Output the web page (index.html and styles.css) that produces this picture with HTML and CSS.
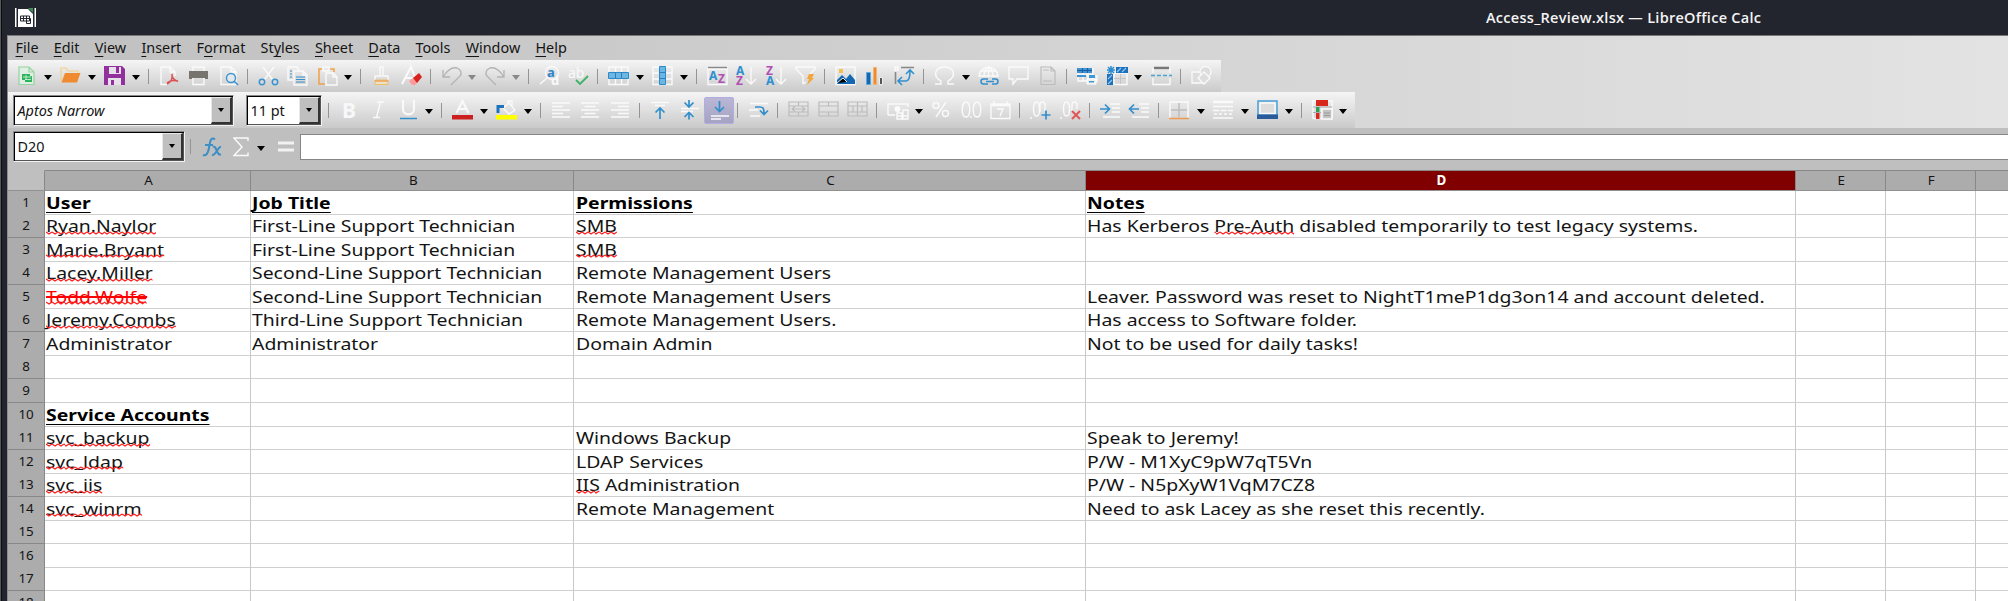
FILE: index.html
```html
<!DOCTYPE html>
<html lang="en">
<head>
<meta charset="utf-8">
<title>Access_Review.xlsx — LibreOffice Calc</title>
<link rel="stylesheet" href="styles.css">
</head>
<body>
<div class="window">
<header class="titlebar">
  <svg class="app" viewBox="0 0 21 19"><path fill="#fff" d="M0 0h1.500v19H0zM19.500 0H21v19h-1.500zM3 1h10l5 5v13H3z"/><path fill="#3f8a55" d="M13 0h5v5z"/><path fill="none" stroke="#22242d" d="M5.500 8h9v5h-9zM5.500 10.500h9M8.500 8v5M11.500 8v7.500h4v-5h-4"/></svg>
  <span class="title">Access_Review.xlsx — LibreOffice Calc</span>
</header>
<div class="app-body">
<div class="bars">
<nav class="menu"><span><u>F</u>ile</span><span><u>E</u>dit</span><span><u>V</u>iew</span><span><u>I</u>nsert</span><span>F<u>o</u>rmat</span><span>St<u>y</u>les</span><span><u>S</u>heet</span><span><u>D</u>ata</span><span><u>T</u>ools</span><span><u>W</u>indow</span><span><u>H</u>elp</span></nav>

<div class="toolbar standard">
<svg class="ic" viewBox="0 0 21 20"><path fill="#e0eee3" stroke="#93d5a0" stroke-width="1.200" d="M3 1h10l5 5v12.500H3zM13 1v5h5"/><path fill="#2ab45c" d="M6 8h8v2h2v6H9v-2H6z"/><path stroke="#dff3e4" stroke-width=".8" d="M7 11h8M10 9v5M9 13.500h6"/></svg><b class="dd"></b>
<svg class="ic" viewBox="0 0 21 20"><path fill="none" stroke="#f5cf86" stroke-width="1.200" d="M1 15V2h5l2 3h10v3"/><path fill="#ef8a31" d="M5 7h15.500l-3.500 9.500H1.500z"/></svg><b class="dd"></b>
<svg class="ic" viewBox="0 0 21 20"><path fill="#92309e" d="M0 0h18l3 3v16H0z"/><path fill="#e6e0e8" d="M5 1h12v7H5zM4 12h13v7H4z"/><path fill="#92309e" d="M12 1h3v6h-3zM7 14h3v5H7z"/></svg><b class="dd"></b><b class="sep"></b>
<svg class="ic" viewBox="0 0 21 20"><path class="w" d="M2 1h9l5 5M2 1v17.500h6M11 1v5h5v4"/><path fill="none" stroke="#dc5050" stroke-width="1.500" d="M13 8c1 5-1 8-5 10M13 8c-.5 4 2 6 6 7.500M8 17c3-3 6-3 11-2"/></svg>
<svg class="ic" viewBox="0 0 21 20"><path class="w" d="M5 5V1h11v4M5 12v6.500h11V12"/><path fill="#77736f" d="M1 5h19v8h-3v-1H4v1H1z"/></svg>
<svg class="ic" viewBox="0 0 21 20"><path class="w" d="M3 1h10l5 5v12.500H3zM13 1v5h5"/><circle cx="13" cy="12" r="4.500" fill="#e4e8ec" stroke="#3b93cf" stroke-width="1.400"/><path stroke="#3b93cf" stroke-width="1.600" d="M16 15l4 4"/></svg><b class="sep"></b>
<svg class="ic" viewBox="0 0 21 20"><path class="w" d="M5 1l10 13M16 1L6 14"/><g fill="none" stroke="#3b93cf" stroke-width="1.500"><circle cx="4" cy="16" r="2.700"/><circle cx="17" cy="16" r="2.700"/></g></svg>
<svg class="ic" viewBox="0 0 21 20"><path class="w" d="M1 1h9l2 3M1 1v13h5M7 5h9l4 4v10H7zM16 5v4h4"/><path class="bl" d="M3 5h2M3 8h2M3 11h2M9 11h9M9 13.500h9M9 16h9"/></svg>
<svg class="ic" viewBox="0 0 21 20"><path fill="none" stroke="#f0a34b" stroke-width="1.600" d="M5 3H2v15h6M13 3h4v3"/><path class="w" d="M6 1h6v4H6zM9 7h7l4 4v8H9zM16 7v4h4"/></svg><b class="dd"></b><b class="sep"></b>
<svg class="ic" viewBox="0 0 21 20"><path class="w" d="M9 9V1h3v8M4 14V10h13v4"/><path fill="#ece1c6" stroke="#edbf68" d="M4 14h13v4.500H4z"/><path stroke="#ef8a31" d="M4 15h13"/></svg>
<svg class="ic" viewBox="0 0 21 20"><path class="w k" d="M1 18L10 1l4 10M5 12h7"/><path fill="#ff9a9a" d="M8 15l4-3 4 5-2 2h-3z"/><path fill="#d8221f" d="M12 12l6-5 3 4-5 6z"/></svg><b class="sep"></b>
<svg class="ic" viewBox="0 0 21 20"><path class="g" d="M2 4v7h7M2 11C7 3 12 1 16 2c5 2 5 7 2 9l-8 8"/></svg><b class="dd off"></b>
<svg class="ic" viewBox="0 0 21 20"><path class="g" d="M19 4v7h-7M19 11C14 3 9 1 5 2 0 4 0 9 3 11l8 8"/></svg><b class="dd off"></b><b class="sep"></b>
<svg class="ic" viewBox="0 0 21 20"><circle cx="13" cy="7" r="6.500" class="w"/><path class="w" d="M8 12l-7 6"/><text x="8" y="11" class="t" fill="#2f86c8" font-size="13">a</text><text x="12" y="19" class="t" fill="#fafafa" font-size="13">d</text></svg>
<svg class="ic" viewBox="0 0 21 20"><text x="0" y="12" class="t n" fill="#fafafa" font-size="14">ab</text><path fill="none" stroke="#3fb268" stroke-width="1.800" d="M8 14l4 4 8-8"/></svg><b class="sep"></b>
<svg class="ic" viewBox="0 0 21 20"><path class="w" d="M1 1h19v17.500H1zM7.500 1v17M13.500 1v17"/><path fill="#6db5e2" stroke="#2b8bc9" d="M.5 6.500h20v6H.5z"/><path stroke="#2b7fc0" d="M7.500 6v7M13.500 6v7"/></svg><b class="dd"></b>
<svg class="ic" viewBox="0 0 21 20"><path class="w" d="M1 1h19v17.500H1zM1 7h19M1 13h19"/><path fill="#6db5e2" stroke="#2b8bc9" d="M7.500.5h6v18h-6z"/><path stroke="#2b7fc0" d="M7 6.500h7M7 12.500h7"/></svg><b class="dd"></b><b class="sep"></b>
<svg class="ic" viewBox="0 0 21 20"><path class="w" d="M1 3h19v15.500H1z"/><path stroke="#888" stroke-width="1.400" d="M1 1.500h19"/><text x="2" y="14" class="t" fill="#2f8fd0" font-size="12">A</text><text x="11" y="17" class="t" fill="#b14fb5" font-size="12">Z</text></svg>
<svg class="ic" viewBox="0 0 21 20"><text x="0" y="9" class="t" fill="#2f8fd0" font-size="12">A</text><text x="0" y="19" class="t" fill="#b14fb5" font-size="12">Z</text><path class="w" d="M15 1v17M10 13l5 5 5-5"/></svg>
<svg class="ic" viewBox="0 0 21 20"><text x="0" y="9" class="t" fill="#b14fb5" font-size="12">Z</text><text x="0" y="19" class="t" fill="#2f8fd0" font-size="12">A</text><path class="w" d="M15 1v17M10 13l5 5 5-5"/></svg>
<svg class="ic" viewBox="0 0 21 20"><path class="w" d="M8 18V10L1 3V1h19v2l-5 5M8 18l3-2"/><path fill="#f4a63b" d="M14 8h5l-2 4h2l-7 7 2-6h-2z"/></svg><b class="sep"></b>
<svg class="ic" viewBox="0 0 21 20"><path class="w" d="M1 1h19v17.500H1z"/><path fill="#1268b3" d="M2 18v-4l5-5 4 4 4-5 5 6v4z"/><path fill="#f6c04f" d="M4 3h4v4H4z"/><path stroke="#e6edf4" d="M2 17l6-5 4 4"/></svg>
<svg class="ic" viewBox="0 0 21 20"><path fill="#1268b3" stroke="#60a8dc" d="M1.500 6.500h4v12h-4z"/><path fill="#ef8a31" stroke="#f3b56d" d="M8.500 1.500h3v17h-3z"/><path fill="#555" stroke="#eee" d="M14.500 11.500h3v7h-3z"/></svg>
<svg class="ic" viewBox="0 0 21 20"><path stroke="#888" stroke-width="1.600" fill="none" d="M7 1.500h13M1.500 6v12" /><path class="w" d="M1 1h3v3H1z"/><path fill="none" stroke="#3190ce" stroke-width="1.600" d="M5 15h7c3 0 4-3 4-10M8 11l-4 4 4 4M12 8l4-4 4 4"/></svg><b class="sep"></b>
<svg class="ic" viewBox="0 0 21 20"><path class="w" d="M1 18h6v-3C-2 10 1 1 10.500 1S23 10 14 15v3h6"/></svg><b class="dd"></b>
<svg class="ic" viewBox="0 0 21 20"><path class="w" d="M1 11C1-2 20-2 20 11M1 10h19M3 5h15M10.500 1v10M6 11C6 5 8 2 10.500 1 13 2 15 5 15 11"/><path fill="none" stroke="#338fcb" stroke-width="1.500" d="M10 13H5.500a2.500 2.500 0 000 5H10M14 13h3.500a2.500 2.500 0 010 5H14M8 15.500h8"/></svg>
<svg class="ic" viewBox="0 0 21 20"><path class="w" d="M1 1h19v12H9l-4 5v-5H1z"/></svg>
<svg class="ic" viewBox="0 0 21 20"><path class="f" d="M4 1h10l4 4v13.500H4zM14 1v4h4M6 4h6M6 15h9"/></svg><b class="sep"></b>
<svg class="ic" viewBox="0 0 21 20"><path class="w" d="M1 3h15v12H1zM6 3v12M11 3v12M1 9h15M16 10h4v6"/><path fill="#3f93d2" d="M0 2h15v5H0zM0 9h9v2H0z"/><path stroke="#1c5f9f" d="M0 4.500h15M5.500 2v5M10.500 2v5"/><path fill="#eee" stroke="#fff" d="M10 13h9v5h-9z"/><path fill="#3d9ad6" d="M12 9h6v3h-6zM12 15h5v1.500h-5z"/></svg>
<svg class="ic" viewBox="0 0 21 20"><path class="w" d="M7 7h13v11.500H7z"/><path stroke="#c4c4c4" d="M7 12.500h12M13.500 8v10"/><path fill="#1d70bd" d="M9 1h12v6H9zM0 8h6v11H0z"/><path stroke="#8cc8ef" stroke-width="1.200" d="M10 6l4-4M15 6l4-4M1 13l4-4M1 18l4-4"/><path stroke="#2d8fd0" stroke-width="1.500" d="M4 0v8M0 4h8M1 1l6 6M7 1L1 7"/></svg><b class="dd"></b>
<svg class="ic" viewBox="0 0 21 20"><path class="w" d="M2 7V3h17v4M2 12v6.500h17V12"/><path stroke="#777" stroke-width="2.500" d="M3 2h15"/><path stroke="#4ba3d3" stroke-width="1.500" stroke-dasharray="4 2" d="M0 9.500h21"/></svg><b class="sep"></b>
<svg class="ic" viewBox="0 0 21 20"><g fill="#ddd" class="s"><path d="M1 6h11v11H1z"/><circle cx="14.500" cy="6" r="5.500"/><path d="M13 6l6 6-6 6-6-6z"/></g></svg>
</div>

<div class="toolbar format">
<div class="combo font"><em>Aptos Narrow</em><i></i></div><div class="combo size"><span>11 pt</span><i></i></div><b class="sep"></b>
<svg class="ic" viewBox="0 0 21 20"><text x="3" y="17.500" class="t" fill="#f8f8f8" font-size="21">B</text></svg>
<svg class="ic" viewBox="0 0 21 20"><path class="w" d="M9 2h7M5 17.500h7M12.500 2l-4 15.500"/></svg>
<svg class="ic" viewBox="0 0 21 20"><path class="w k" d="M5 0v9c0 7 11 7 11 0V0"/><path stroke="#338fcb" stroke-width="1.500" d="M2 18.500h17"/></svg><b class="dd"></b><b class="sep"></b>
<svg class="ic" viewBox="0 0 21 20"><path class="w k" d="M4.500 13L10.500 1l6 12M6.500 9h8"/><path fill="#cc2020" d="M0 15h21v4.500H0z"/></svg><b class="dd"></b>
<svg class="ic" viewBox="0 0 21 20"><path class="w" d="M7 8l6-5 6 7-6 4zM12 5V1h4v6"/><path fill="none" stroke="#1d74bd" stroke-width="3" d="M2 13V6.500h6"/><path fill="#ff0" d="M0 15h21v4.500H0z"/></svg><b class="dd"></b><b class="sep"></b>
<svg class="ic" viewBox="0 0 21 20"><path class="w" d="M1 3h18M1 6.500h11M1 10h18M1 13.500h11M1 17h18"/></svg>
<svg class="ic" viewBox="0 0 21 20"><path class="w" d="M1 3h18M4.500 6.500h11M1 10h18M4.500 13.500h11M1 17h18"/></svg>
<svg class="ic" viewBox="0 0 21 20"><path class="w" d="M1 3h18M8 6.500h11M1 10h18M8 13.500h11M1 17h18"/></svg><b class="sep"></b>
<svg class="ic" viewBox="0 0 21 20"><path class="w" d="M1 2.500h18M5 5.500h10"/><path class="bl a" d="M10 19V8M5.500 12.500L10 8l4.500 4.500"/></svg>
<svg class="ic" viewBox="0 0 21 20"><path class="w" d="M2 8.500h18M2 11.500h12"/><path class="bl a" d="M10 0v6M5.500 2.500L10 7l4.500-4.500M10 19.500v-6M5.500 17L10 12.500l4.500 4.500"/></svg>
<span class="on"><svg class="ic" viewBox="0 0 21 20"><path class="w" d="M2 15h18M2 18h10"/><path class="bl a" d="M10.500 0v10M6 6l4.500 4.500L15 6"/></svg></span><b class="sep"></b>
<svg class="ic" viewBox="0 0 21 20"><path class="w" d="M2 3.500h18M1 10h9M2 16h10"/><path class="bl a" d="M7 7h5c4 0 4 3 4 7M12 10.500l4 4 4-4"/></svg><b class="sep"></b>
<svg class="ic" viewBox="0 0 21 20"><path class="f" d="M1 2h19v14H1zM1 6h19M1 12h19M10.500 2v4M10.500 12v4M4 9h13M7 6.500L4 9l3 2.500M14 6.500L17 9l-3 2.500"/></svg>
<svg class="ic" viewBox="0 0 21 20"><path class="f" d="M1 2h19v14H1zM1 6h19M1 12h19M10.500 2v4M10.500 12v4"/></svg>
<svg class="ic" viewBox="0 0 21 20"><path class="f" d="M1 2h19v14H1zM1 6h19M1 12h19M10.500 2v14M6 6v6M15 6v6"/></svg><b class="sep"></b>
<svg class="ic" viewBox="0 0 21 20"><path class="w" d="M1 15V4h20v3M1 15h7"/><circle cx="10.500" cy="9" r="3" fill="#fafafa"/><path class="w" d="M10 13h5v6h-5zM16 10h5v9h-5zM10 16h11"/></svg><b class="dd"></b>
<svg class="ic" viewBox="0 0 21 20"><g class="w"><circle cx="5" cy="5.500" r="3"/><circle cx="14.500" cy="13.500" r="3"/><path d="M15 2L5 17"/></g></svg>
<svg class="ic" viewBox="0 0 21 20"><path class="w" d="M5 2c5 0 5 15 0 15S0 2 5 2zM16 2c5 0 5 15 0 15S11 2 16 2zM10 16v2"/></svg>
<svg class="ic" viewBox="0 0 21 20"><path class="w" d="M1 4h19v14.500H1zM1 5.500h19M4 1v4M17 1v4M7 9h6l-3 7"/></svg><b class="sep"></b>
<svg class="ic" viewBox="0 0 21 20"><path class="w" d="M6.500 2c4 0 4 14 0 14s-4-14 0-14zM15 11V5c0-4-5-4-5 0v7M1 17v2"/><path class="bl a" d="M11.500 15h9M16 10.500v9"/></svg>
<svg class="ic" viewBox="0 0 21 20"><path class="w" d="M6.500 2c4 0 4 14 0 14s-4-14 0-14zM17 9V5c0-4-5-4-5 0v6M1 17v2"/><path stroke="#e05555" stroke-width="2" d="M12 11l8 8M20 11l-8 8"/></svg><b class="sep"></b>
<svg class="ic" viewBox="0 0 21 20"><path class="w" d="M10 4h10M12 8h8M12 12h8M3 17h17"/><path class="bl a" d="M0 9h9M5 4.500L9.500 9 5 13.500"/></svg>
<svg class="ic" viewBox="0 0 21 20"><path class="w" d="M10 4h10M12 8h8M12 12h8M3 17h17"/><path class="bl a" d="M1 9h9M5 4.500L.5 9 5 13.500"/></svg><b class="sep"></b>
<svg class="ic" viewBox="0 0 21 20"><path class="w" d="M1 18V2h18v16"/><path stroke="#bdbdbd" stroke-width="1.500" d="M10 3v14M2 10h16"/><path stroke="#ee9a52" stroke-width="1.500" d="M0 18.500h20"/></svg><b class="dd"></b>
<svg class="ic" viewBox="0 0 21 20"><path stroke="#fafafa" stroke-width="2.500" d="M0 2h20"/><path class="w" d="M0 6.500h20M0 18h20"/><path class="w" stroke-dasharray="6 1.500" d="M0 10.500h20"/><path class="w" stroke-dasharray="3 2" d="M1 14h20"/></svg><b class="dd"></b>
<svg class="ic" viewBox="0 0 21 20"><path fill="#ddd" stroke="#49a0d8" stroke-width="1.500" d="M1 1h19v14H1z"/><path class="w" d="M3 3h15v10.500H3z"/><path fill="#2a5c9c" d="M0 14.500h21V19H0z"/></svg><b class="dd"></b><b class="sep"></b>
<svg class="ic" viewBox="0 0 21 20"><path class="w" d="M1 1h19v17.500H1z"/><path stroke="#aaa" d="M1 7h19M1 12.500h8"/><path fill="#d8281c" d="M4 0h12v6H4zM4 13h3.500v6H4z"/><path fill="#2f9e50" d="M4 7h3.500v5H4z"/><path fill="#c4c4c4" stroke="#fafafa" stroke-width="1.500" d="M10 9h10v10H10z"/><path stroke="#999" d="M12 13h6M12 15.500h6"/></svg><b class="dd"></b>
</div>
</div>

<div class="formula">
<div class="combo name"><span>D20</span><i></i></div><b class="sep"></b>
<svg class="fx" viewBox="0 0 20 20"><path fill="none" stroke="#3a8fc6" stroke-width="2" d="M13 2.500C9-1 8 5 7.500 8S6 20 1 18M3 8h8M11 10c4-2 3 9 8 7.500M19 10c-3-1-5 9-9 8"/></svg>
<svg class="sum" viewBox="0 0 16 20"><path class="w" d="M15 4V1H1l8 9-8 8.500h14v-3"/></svg><b class="dd"></b>
<svg class="eq" viewBox="0 0 16 20"><path stroke="#f2f2f2" stroke-width="3" d="M0 6h16M0 13h16"/></svg>
<div class="input"></div>
</div>

<main class="sheet">
<div class="row head"><div></div><div>A</div><div>B</div><div>C</div><div class="sel">D</div><div>E</div><div>F</div><div></div></div>
<div class="row"><div>1</div><div><span class="hd">User</span></div><div><span class="hd">Job Title</span></div><div><span class="hd">Permissions</span></div><div><span class="hd">Notes</span></div><div></div><div></div><div></div></div>
<div class="row"><div>2</div><div><span><q>Ryan.Naylor</q></span></div><div><span>First-Line Support Technician</span></div><div><span><q>SMB</q></span></div><div><span>Has Kerberos <q>Pre-Auth</q> disabled temporarily to test legacy systems.</span></div><div></div><div></div><div></div></div>
<div class="row"><div>3</div><div><span><q>Marie.Bryant</q></span></div><div><span>First-Line Support Technician</span></div><div><span><q>SMB</q></span></div><div></div><div></div><div></div><div></div></div>
<div class="row"><div>4</div><div><span><q>Lacey.Miller</q></span></div><div><span>Second-Line Support Technician</span></div><div><span>Remote Management Users</span></div><div></div><div></div><div></div><div></div></div>
<div class="row"><div>5</div><div><span class="gone"><q>Todd.Wolfe</q></span></div><div><span>Second-Line Support Technician</span></div><div><span>Remote Management Users</span></div><div><span>Leaver. Password was reset to NightT1meP1dg3on14 and account deleted.</span></div><div></div><div></div><div></div></div>
<div class="row"><div>6</div><div><span><q>Jeremy.Combs</q></span></div><div><span>Third-Line Support Technician</span></div><div><span>Remote Management Users.</span></div><div><span>Has access to Software folder.</span></div><div></div><div></div><div></div></div>
<div class="row"><div>7</div><div><span>Administrator</span></div><div><span>Administrator</span></div><div><span>Domain Admin</span></div><div><span>Not to be used for daily tasks!</span></div><div></div><div></div><div></div></div>
<div class="row"><div>8</div><div></div><div></div><div></div><div></div><div></div><div></div><div></div></div>
<div class="row"><div>9</div><div></div><div></div><div></div><div></div><div></div><div></div><div></div></div>
<div class="row"><div>10</div><div><span class="hd">Service Accounts</span></div><div></div><div></div><div></div><div></div><div></div><div></div></div>
<div class="row"><div>11</div><div><span><q>svc_backup</q></span></div><div></div><div><span>Windows Backup</span></div><div><span>Speak to Jeremy!</span></div><div></div><div></div><div></div></div>
<div class="row"><div>12</div><div><span><q>svc_ldap</q></span></div><div></div><div><span>LDAP Services</span></div><div><span>P/W - M1XyC9pW7qT5Vn</span></div><div></div><div></div><div></div></div>
<div class="row"><div>13</div><div><span><q>svc_iis</q></span></div><div></div><div><span><q>IIS</q> Administration</span></div><div><span>P/W - N5pXyW1VqM7CZ8</span></div><div></div><div></div><div></div></div>
<div class="row"><div>14</div><div><span><q>svc_winrm</q></span></div><div></div><div><span>Remote Management</span></div><div><span>Need to ask Lacey as she reset this recently.</span></div><div></div><div></div><div></div></div>
<div class="row"><div>15</div><div></div><div></div><div></div><div></div><div></div><div></div><div></div></div>
<div class="row"><div>16</div><div></div><div></div><div></div><div></div><div></div><div></div><div></div></div>
<div class="row"><div>17</div><div></div><div></div><div></div><div></div><div></div><div></div><div></div></div>
<div class="row"><div>18</div><div></div><div></div><div></div><div></div><div></div><div></div><div></div></div>
</main>
</div>
</div>
</body>
</html>
```

FILE: styles.css
```css
* { box-sizing: border-box; }
body { margin: 0; font-family: "Noto Sans", sans-serif; color: #141414; }
.window { width: 2008px; height: 601px; overflow: hidden; background: #23252e; border-left: 1px solid #55575c; box-shadow: inset 1px 0 #0c0d11; padding-left: 6px; }
.titlebar { height: 35px; display: flex; align-items: center; padding-left: 8px; border-radius: 8px 0 0 0; }
.app { width: 21px; height: 19px; }
.title { margin-left: 1450px; font: 600 14.500px "Open Sans", sans-serif; letter-spacing: .28px; color: #f4f4f4; white-space: nowrap; }
.app-body { border-left: 1px solid #8c8c8c; border-top: 1px solid #777; height: 566px; background: #bfbfbf; }
.bars { height: 92px; background: linear-gradient(90deg, #c0c0c0, #e3e3e3); }

.menu { height: 24px; display: flex; align-items: center; padding: 0 0 1px 7.500px; gap: 15.200px; font-size: 14.400px; }
.menu u { text-underline-offset: 3px; text-decoration-thickness: 1px; text-decoration-skip-ink: none; }

.toolbar { display: flex; align-items: center; background: linear-gradient(#f5f5f5, #cacaca); }
.standard { height: 32px; width: 1213px; padding-left: 4px; }
.format { height: 36px; width: 1347px; padding-left: 5px; }
.ic { flex: none; width: 21px; height: 20px; margin: 0 4.250px; overflow: visible; }
.dd { flex: none; width: 14.500px; height: 5px; margin-top: 3px; display: flex; justify-content: center; padding-right: 2px; }
.dd::after { content: ""; border: 4.500px solid transparent; border-top: 5px solid #000; border-bottom: 0; }
.off::after { border-top-color: #888; }
.sep { flex: none; width: 10.450px; height: 15px; display: flex; justify-content: center; padding-right: 2px; }
.sep::after { content: ""; width: 1px; background: #949494; }
.on { flex: none; display: flex; width: 29.500px; height: 27px; padding-top: 3px; background: linear-gradient(#b9b6d6, #a5a2c2); border: 1px solid #b0aee0; border-radius: 2px; }
.on .ic { margin: 0 3.250px; }
.w { fill: none; stroke: #fafafa; stroke-width: 1.400; }
.k { stroke-width: 2; }
.g { fill: none; stroke: #b3b3b3; stroke-width: 1.300; }
.f { fill: none; stroke: #bcbcbc; stroke-width: 1.200; }
.s { stroke: #fafafa; stroke-width: 1.300; }
.bl { fill: none; stroke: #338fcb; stroke-width: 1.200; }
.a { stroke-width: 1.700; }
.t { font-family: "Noto Sans", sans-serif; font-weight: 700; }
.n { font-weight: 400; }

.combo { flex: none; display: flex; height: 31px; border: 1px solid #888; border-right-color: #f3f3f3; border-bottom-color: #f3f3f3; background: #fff; box-shadow: inset 1px 1px #000, inset -1px -1px #555; align-items: center; font-size: 14.400px; padding: 1px 1px 1px 3.500px; }
.combo i { margin-left: auto; width: 21px; height: 27px; background: #bfbfbf; border: 1px solid #e8e8e8; border-right: 2px solid #333; border-bottom: 2px solid #333; display: flex; align-items: center; justify-content: center; }
.combo i::after { content: ""; border: 3.500px solid transparent; border-top: 4px solid #000; border-bottom: 0; }
.font { width: 221px; }
.size { width: 76px; margin: 0 2px 0 12px; }
.formula { height: 42px; display: flex; align-items: center; padding: 0 0 5px 5px; }
.name { width: 172px; }
.formula .sep { margin-left: 1px; }
.fx { width: 20px; height: 20px; margin-left: 6px; flex: none; }
.sum { width: 16px; height: 20px; margin: 0 6px 0 10.500px; flex: none; }
.eq { width: 16px; height: 20px; margin: 0 6px 0 8.500px; flex: none; }
.input { flex: 1; height: 26px; background: #fff; border: 1px solid #858585; border-right: 0; }

.sheet { background: #fff; }
.row { display: grid; grid-template-columns: 37.100px 206px 323.300px 511.400px 710px 90px 90px 33px; height: 23.550px; }
.row > div { border-right: 1px solid #c8c8c8; border-bottom: 1px solid #cfcfcf; padding-left: 1.200px; white-space: nowrap; line-height: 23px; font-size: 16.600px; }
.row > div:first-child, .head > div { background: #acacac; border-color: #888; text-align: center; padding: 0; font-size: 13.400px; }
.head { height: 20.600px; }
.row.head > div { border-top: 1px solid #888; border-bottom: 1px solid #909090; line-height: 19px; padding-left: 2px; }
.row.head > div:first-child { background: #bfbfbf; border-top-color: #bfbfbf; }
.row.head > .sel { background: #800000; color: #fff; font-weight: 700; }
.row span { display: inline-block; transform: scaleX(1.170); transform-origin: 0 0; }
.hd { font-weight: 700; color: #000; text-decoration: underline; text-decoration-thickness: 1px; text-underline-offset: 3px; text-decoration-skip-ink: none; }
.gone, .gone q { color: #f00; text-decoration: line-through; text-decoration-thickness: 1.500px; }
q { quotes: none; position: relative; display: inline-block; }
q::after { content: ""; position: absolute; left: 0; right: 0; top: 16.500px; height: 4px; background: url("data:image/svg+xml,%3Csvg xmlns='http://www.w3.org/2000/svg' width='5' height='4'%3E%3Cpath d='M0 1 2.5 3 5 1' fill='none' stroke='%23f22'/%3E%3C/svg%3E") repeat-x; }
```
